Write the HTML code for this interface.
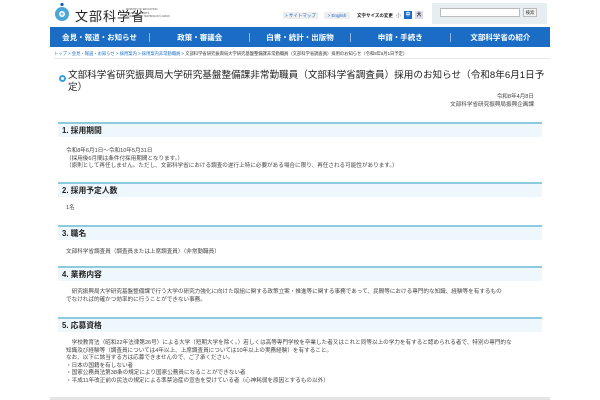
<!DOCTYPE html>
<html><head><meta charset="utf-8"><style>
*{margin:0;padding:0;box-sizing:border-box}
body{width:600px;height:400px;overflow:hidden;background:#fff;font-family:"Liberation Sans","Noto Sans CJK JP",sans-serif;color:#333;position:relative}
.a{position:absolute;white-space:nowrap}
.nav{position:absolute;left:50px;top:27px;width:500px;height:20px;background:#1a6cc4;display:flex;align-items:center}
.nav div{flex:1;text-align:center;color:#fff;font-size:7.5px;font-weight:bold;border-right:1px solid #8fb6e2;line-height:9px}
.nav div:last-child{border-right:none}
.sec{position:absolute;left:58px;width:484px;height:15px;background:#eef7fb;border-top:2px solid #8ccadd;font-size:7.8px;font-weight:bold;padding-left:4px;line-height:13px;color:#222}
.t{position:absolute;left:66px;font-size:5.6px;line-height:7.6px;color:#444;white-space:nowrap}
</style></head><body>
<svg class="a" style="left:54px;top:2px" width="16" height="20"><circle cx="8" cy="2.5" r="1.6" fill="#1a5aa8"/><circle cx="8" cy="12" r="7" fill="#4aa6d8"/><circle cx="8" cy="12" r="3" fill="#fff"/><circle cx="8" cy="12" r="1.5" fill="#8bd"/></svg>
<div class="a" style="left:75px;top:6px;font-size:13px;color:#222;letter-spacing:1px">文部科学省</div>
<div class="a" style="left:126px;top:8px;font-size:2.5px;line-height:3.5px;color:#555">MINISTRY OF EDUCATION,<br>CULTURE, SPORTS,<br>SCIENCE AND TECHNOLOGY-JAPAN</div>
<div class="a" style="left:283px;top:12px;width:35px;height:7px;background:#eee;font-size:4.5px;line-height:7px;text-align:center;color:#1a6cc4">&gt; サイトマップ</div>
<div class="a" style="left:324px;top:12px;width:26px;height:7px;background:#eee;font-size:4.5px;line-height:7px;text-align:center;color:#1a6cc4">&gt; English</div>
<div class="a" style="left:357px;top:13px;font-size:4.5px;font-weight:bold;color:#222">文字サイズの変更</div>
<div class="a" style="left:396px;top:12px;font-size:5px;color:#777">小</div>
<div class="a" style="left:404px;top:11px;width:8px;height:8px;background:#1a6cc4;color:#fff;font-size:5px;line-height:8px;text-align:center;font-weight:bold">中</div>
<div class="a" style="left:415px;top:11px;width:8px;height:8px;background:#dde;font-size:5px;line-height:8px;text-align:center;font-weight:bold">大</div>
<div class="a" style="left:432px;top:3px;width:115px;height:21px;background:#e6eef2"></div>
<div class="a" style="left:440px;top:8px;width:80px;height:9px;background:#fff;border:1px solid #bbb"></div>
<div class="a" style="left:523px;top:8px;width:14px;height:9px;background:#f4f4f4;border:1px solid #bbb;font-size:4.5px;line-height:7px;text-align:center">検索</div>
<div class="nav"><div>会見・報道・お知らせ</div><div>政策・審議会</div><div>白書・統計・出版物</div><div>申請・手続き</div><div>文部科学省の紹介</div></div>
<div class="a" style="left:54px;top:51px;font-size:4.3px;color:#1a6cc4">トップ &gt; 会見・報道・お知らせ &gt; 採用案内 &gt; 採用案内非常勤職員 &gt; <span style="color:#333">文部科学省研究振興局大学研究基盤整備課非常勤職員（文部科学省調査員）採用のお知らせ（令和8年6月1日予定）</span></div>
<div class="a" style="left:54px;top:58px;width:496px;height:1px;background:#e8e8e8"></div>
<div class="a" style="left:59px;top:75px;width:7px;height:7px;border-radius:50%;border:2px solid #3aa0d8;background:#fff"></div>
<div class="a" style="left:68px;top:70px;font-size:9.6px;line-height:12px;color:#222;white-space:normal;width:480px">文部科学省研究振興局大学研究基盤整備課非常勤職員（文部科学省調査員）採用のお知らせ（令和8年6月1日予定）</div>
<div class="a" style="right:66px;top:94px;font-size:5.6px;line-height:7.5px;text-align:right;color:#444">令和8年4月8日<br>文部科学省研究振興局振興企画課</div>
<div class="sec" style="top:122px">1. 採用期間</div>
<div class="t" style="top:148px">令和8年6月1日～令和10年5月31日<br>（採用後6月間は条件付採用期間となります。）<br>（原則として再任しません。ただし、文部科学省における調査の遂行上特に必要がある場合に限り、再任される可能性があります。）</div>
<div class="sec" style="top:182px">2. 採用予定人数</div>
<div class="t" style="top:205px">1名</div>
<div class="sec" style="top:225px">3. 職名</div>
<div class="t" style="top:249px">文部科学省調査員（調査員または上席調査員）（非常勤職員）</div>
<div class="sec" style="top:266px">4. 業務内容</div>
<div class="t" style="top:289px">　研究振興局大学研究基盤整備課で行う大学の研究力強化に向けた取組に関する政策立案・推進等に関する事務であって、民間等における専門的な知識、経験等を有するもの<br>でなければ的確かつ効率的に行うことができない事務。</div>
<div class="sec" style="top:317px">5. 応募資格</div>
<div class="t" style="top:340px">　学校教育法（昭和22年法律第26号）による大学（短期大学を除く。）若しくは高等専門学校を卒業した者又はこれと同等以上の学力を有すると認められる者で、特別の専門的な<br>知識及び経験等（調査員については4年以上、上席調査員については10年以上の実務経験）を有すること。<br>なお、以下に該当する方は応募できませんので、ご了承ください。<br>・日本の国籍を有しない者<br>・国家公務員法第38条の規定により国家公務員になることができない者<br>・平成11年改正前の民法の規定による準禁治産の宣告を受けている者（心神耗弱を原因とするもの以外）</div>
<div class="a" style="left:50px;top:397px;width:500px;height:3px;background:#e4e4e4"></div>
</body></html>
